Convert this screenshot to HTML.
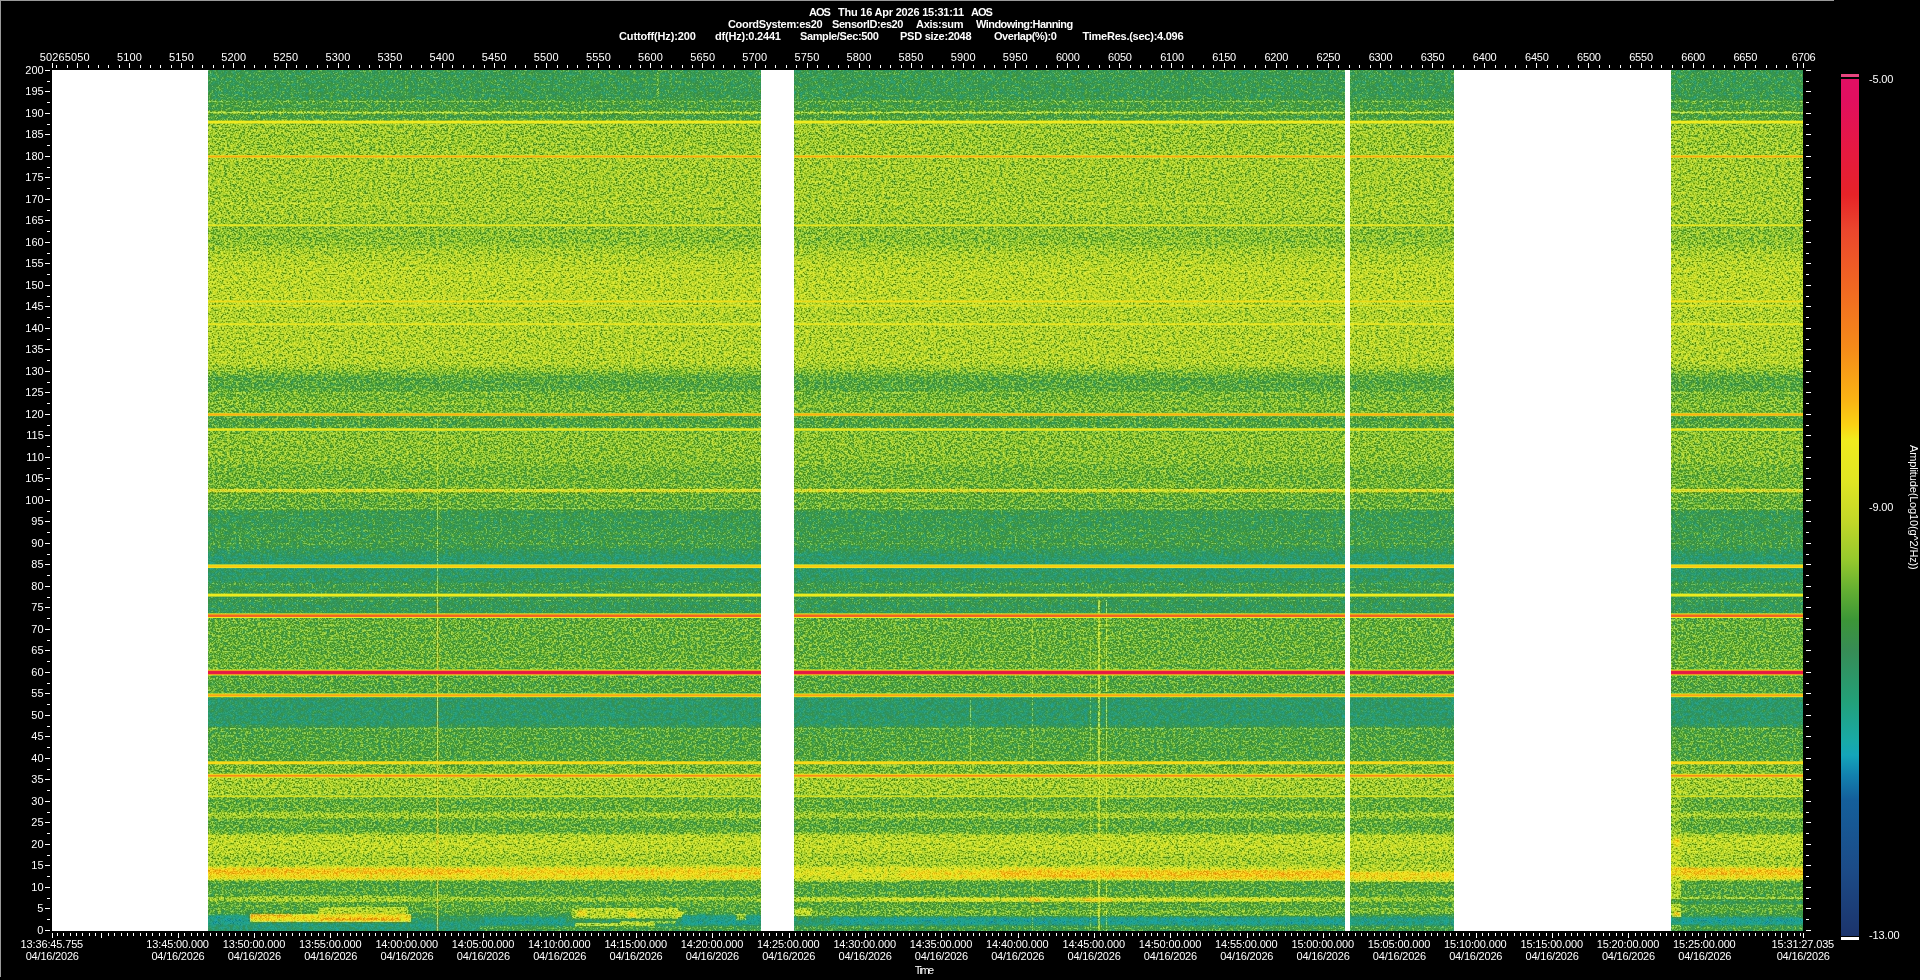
<!DOCTYPE html>
<html><head><meta charset="utf-8"><title>AOS spectrogram</title>
<style>html,body{margin:0;padding:0;background:#000;}
body{width:1920px;height:980px;position:relative;overflow:hidden;font-family:"Liberation Sans",sans-serif;font-size:11px;color:#fff;}
.t{position:absolute;white-space:pre;line-height:12px;height:12px;}
.b{font-weight:bold;}
.c{transform:translateX(-50%);text-align:center;}
.r{text-align:right;}
svg{position:absolute;left:0;top:0;}
</style></head><body>
<svg width="1920" height="980" viewBox="0 0 1920 980">
<defs>
<linearGradient id="lv" gradientUnits="userSpaceOnUse" x1="0" y1="70" x2="0" y2="931">
<stop offset="0.0006" stop-color="rgb(88,88,88)"/><stop offset="0.0330" stop-color="rgb(88,88,88)"/><stop offset="0.0380" stop-color="rgb(94,94,94)"/><stop offset="0.0555" stop-color="rgb(94,94,94)"/><stop offset="0.0640" stop-color="rgb(115,115,115)"/><stop offset="0.0955" stop-color="rgb(115,115,115)"/><stop offset="0.1055" stop-color="rgb(117,117,117)"/><stop offset="0.1704" stop-color="rgb(117,117,117)"/><stop offset="0.1844" stop-color="rgb(111,111,111)"/><stop offset="0.2003" stop-color="rgb(111,111,111)"/><stop offset="0.2103" stop-color="rgb(118,118,118)"/><stop offset="0.2203" stop-color="rgb(121,121,121)"/><stop offset="0.2303" stop-color="rgb(124,124,124)"/><stop offset="0.2653" stop-color="rgb(124,124,124)"/><stop offset="0.2803" stop-color="rgb(121,121,121)"/><stop offset="0.3402" stop-color="rgb(121,121,121)"/><stop offset="0.3477" stop-color="rgb(113,113,113)"/><stop offset="0.3577" stop-color="rgb(99,99,99)"/><stop offset="0.3652" stop-color="rgb(98,98,98)"/><stop offset="0.3721" stop-color="rgb(99,99,99)"/><stop offset="0.3776" stop-color="rgb(105,105,105)"/><stop offset="0.3851" stop-color="rgb(107,107,107)"/><stop offset="0.3951" stop-color="rgb(107,107,107)"/><stop offset="0.4026" stop-color="rgb(97,97,97)"/><stop offset="0.4126" stop-color="rgb(97,97,97)"/><stop offset="0.4226" stop-color="rgb(111,111,111)"/><stop offset="0.4551" stop-color="rgb(110,110,110)"/><stop offset="0.4650" stop-color="rgb(105,105,105)"/><stop offset="0.4850" stop-color="rgb(105,105,105)"/><stop offset="0.4950" stop-color="rgb(102,102,102)"/><stop offset="0.5075" stop-color="rgb(102,102,102)"/><stop offset="0.5125" stop-color="rgb(88,88,88)"/><stop offset="0.5300" stop-color="rgb(88,88,88)"/><stop offset="0.5350" stop-color="rgb(91,91,91)"/><stop offset="0.5449" stop-color="rgb(91,91,91)"/><stop offset="0.5549" stop-color="rgb(89,89,89)"/><stop offset="0.5599" stop-color="rgb(83,83,83)"/><stop offset="0.5649" stop-color="rgb(78,78,78)"/><stop offset="0.5724" stop-color="rgb(78,78,78)"/><stop offset="0.5799" stop-color="rgb(79,79,79)"/><stop offset="0.5924" stop-color="rgb(80,80,80)"/><stop offset="0.5974" stop-color="rgb(88,88,88)"/><stop offset="0.6049" stop-color="rgb(88,88,88)"/><stop offset="0.6174" stop-color="rgb(85,85,85)"/><stop offset="0.6298" stop-color="rgb(85,85,85)"/><stop offset="0.6378" stop-color="rgb(102,102,102)"/><stop offset="0.6848" stop-color="rgb(102,102,102)"/><stop offset="0.6948" stop-color="rgb(103,103,103)"/><stop offset="0.7048" stop-color="rgb(99,99,99)"/><stop offset="0.7222" stop-color="rgb(98,98,98)"/><stop offset="0.7297" stop-color="rgb(79,79,79)"/><stop offset="0.7597" stop-color="rgb(79,79,79)"/><stop offset="0.7647" stop-color="rgb(92,92,92)"/><stop offset="0.7697" stop-color="rgb(97,97,97)"/><stop offset="0.7997" stop-color="rgb(97,97,97)"/><stop offset="0.8071" stop-color="rgb(107,107,107)"/><stop offset="0.8171" stop-color="rgb(107,107,107)"/><stop offset="0.8221" stop-color="rgb(117,117,117)"/><stop offset="0.8396" stop-color="rgb(117,117,117)"/><stop offset="0.8471" stop-color="rgb(102,102,102)"/><stop offset="0.8606" stop-color="rgb(102,102,102)"/><stop offset="0.8636" stop-color="rgb(117,117,117)"/><stop offset="0.8676" stop-color="rgb(117,117,117)"/><stop offset="0.8706" stop-color="rgb(101,101,101)"/><stop offset="0.8846" stop-color="rgb(101,101,101)"/><stop offset="0.8895" stop-color="rgb(124,124,124)"/><stop offset="0.9045" stop-color="rgb(125,125,125)"/><stop offset="0.9120" stop-color="rgb(119,119,119)"/><stop offset="0.9235" stop-color="rgb(117,117,117)"/><stop offset="0.9270" stop-color="rgb(143,143,143)"/><stop offset="0.9335" stop-color="rgb(147,147,147)"/><stop offset="0.9395" stop-color="rgb(142,142,142)"/><stop offset="0.9425" stop-color="rgb(98,98,98)"/><stop offset="0.9595" stop-color="rgb(98,98,98)"/><stop offset="0.9610" stop-color="rgb(115,115,115)"/><stop offset="0.9645" stop-color="rgb(115,115,115)"/><stop offset="0.9665" stop-color="rgb(99,99,99)"/><stop offset="0.9769" stop-color="rgb(99,99,99)"/><stop offset="0.9829" stop-color="rgb(89,89,89)"/><stop offset="0.9884" stop-color="rgb(79,79,79)"/><stop offset="0.9929" stop-color="rgb(74,74,74)"/><stop offset="0.9994" stop-color="rgb(76,76,76)"/>
</linearGradient>
<filter id="sp" filterUnits="userSpaceOnUse" x="48" y="66" width="1759" height="869" color-interpolation-filters="sRGB">
<feTurbulence type="fractalNoise" baseFrequency="0.66 0.7" numOctaves="1" seed="7" result="n"/>
<feColorMatrix in="n" type="matrix" values="2.5 0 0 0 -0.75  2.5 0 0 0 -0.75  2.5 0 0 0 -0.75  0 0 0 0 1" result="ng"/>
<feTurbulence type="fractalNoise" baseFrequency="0.33 0.37" numOctaves="1" seed="11" result="n2"/>
<feColorMatrix in="n2" type="matrix" values="2.5 0 0 0 -0.75  2.5 0 0 0 -0.75  2.5 0 0 0 -0.75  0 0 0 0 1" result="ng2"/>
<feComposite in="ng" in2="ng2" operator="arithmetic" k1="0" k2="1" k3="0.6" k4="-0.3" result="ng"/>
<feComponentTransfer in="ng" result="ns"><feFuncR type="table" tableValues="0.367 0.394 0.395 0.398 0.400 0.402 0.404 0.406 0.408 0.411 0.413 0.415 0.417 0.419 0.421 0.423 0.424 0.426 0.428 0.430 0.432 0.434 0.435 0.437 0.439 0.440 0.442 0.444 0.445 0.447 0.449 0.450 0.452 0.454 0.455 0.457 0.458 0.460 0.461 0.463 0.465 0.466 0.468 0.469 0.471 0.472 0.474 0.475 0.477 0.478 0.480 0.481 0.482 0.484 0.485 0.487 0.488 0.489 0.491 0.492 0.494 0.495 0.496 0.498 0.499 0.500 0.502 0.503 0.504 0.505 0.507 0.508 0.509 0.511 0.512 0.513 0.514 0.516 0.517 0.518 0.519 0.520 0.522 0.523 0.524 0.525 0.526 0.528 0.529 0.530 0.531 0.532 0.533 0.535 0.536 0.537 0.538 0.539 0.540 0.541 0.542 0.543 0.545 0.546 0.547 0.548 0.549 0.550 0.551 0.552 0.553 0.554 0.555 0.556 0.557 0.558 0.559 0.561 0.562 0.563 0.564 0.565 0.566 0.567 0.568 0.569 0.570 0.571 0.582"/><feFuncG type="table" tableValues="0.367 0.394 0.395 0.398 0.400 0.402 0.404 0.406 0.408 0.411 0.413 0.415 0.417 0.419 0.421 0.423 0.424 0.426 0.428 0.430 0.432 0.434 0.435 0.437 0.439 0.440 0.442 0.444 0.445 0.447 0.449 0.450 0.452 0.454 0.455 0.457 0.458 0.460 0.461 0.463 0.465 0.466 0.468 0.469 0.471 0.472 0.474 0.475 0.477 0.478 0.480 0.481 0.482 0.484 0.485 0.487 0.488 0.489 0.491 0.492 0.494 0.495 0.496 0.498 0.499 0.500 0.502 0.503 0.504 0.505 0.507 0.508 0.509 0.511 0.512 0.513 0.514 0.516 0.517 0.518 0.519 0.520 0.522 0.523 0.524 0.525 0.526 0.528 0.529 0.530 0.531 0.532 0.533 0.535 0.536 0.537 0.538 0.539 0.540 0.541 0.542 0.543 0.545 0.546 0.547 0.548 0.549 0.550 0.551 0.552 0.553 0.554 0.555 0.556 0.557 0.558 0.559 0.561 0.562 0.563 0.564 0.565 0.566 0.567 0.568 0.569 0.570 0.571 0.582"/><feFuncB type="table" tableValues="0.367 0.394 0.395 0.398 0.400 0.402 0.404 0.406 0.408 0.411 0.413 0.415 0.417 0.419 0.421 0.423 0.424 0.426 0.428 0.430 0.432 0.434 0.435 0.437 0.439 0.440 0.442 0.444 0.445 0.447 0.449 0.450 0.452 0.454 0.455 0.457 0.458 0.460 0.461 0.463 0.465 0.466 0.468 0.469 0.471 0.472 0.474 0.475 0.477 0.478 0.480 0.481 0.482 0.484 0.485 0.487 0.488 0.489 0.491 0.492 0.494 0.495 0.496 0.498 0.499 0.500 0.502 0.503 0.504 0.505 0.507 0.508 0.509 0.511 0.512 0.513 0.514 0.516 0.517 0.518 0.519 0.520 0.522 0.523 0.524 0.525 0.526 0.528 0.529 0.530 0.531 0.532 0.533 0.535 0.536 0.537 0.538 0.539 0.540 0.541 0.542 0.543 0.545 0.546 0.547 0.548 0.549 0.550 0.551 0.552 0.553 0.554 0.555 0.556 0.557 0.558 0.559 0.561 0.562 0.563 0.564 0.565 0.566 0.567 0.568 0.569 0.570 0.571 0.582"/></feComponentTransfer>
<feComposite in="SourceGraphic" in2="ns" operator="arithmetic" k1="0" k2="1" k3="1" k4="-0.5" result="lv2"/>
<feComponentTransfer in="lv2" result="col"><feFuncR type="table" tableValues="0.088 0.086 0.085 0.083 0.081 0.080 0.078 0.077 0.076 0.075 0.074 0.073 0.072 0.071 0.072 0.073 0.074 0.076 0.077 0.078 0.083 0.087 0.092 0.099 0.107 0.116 0.124 0.133 0.144 0.157 0.170 0.184 0.197 0.210 0.219 0.225 0.230 0.240 0.285 0.329 0.374 0.426 0.482 0.538 0.592 0.630 0.669 0.707 0.746 0.777 0.802 0.827 0.852 0.877 0.892 0.905 0.917 0.930 0.943 0.967 0.980 0.980 0.980 0.979 0.975 0.972 0.969 0.965 0.962 0.959 0.957 0.954 0.952 0.950 0.947 0.945 0.942 0.940 0.936 0.933 0.930 0.926 0.923 0.919 0.914 0.909 0.904 0.902 0.902 0.902 0.902 0.902 0.901 0.898 0.894 0.891 0.887 0.884 0.882 0.882 0.882"/><feFuncG type="table" tableValues="0.350 0.353 0.357 0.361 0.365 0.369 0.373 0.391 0.410 0.429 0.448 0.467 0.486 0.505 0.528 0.552 0.575 0.599 0.623 0.647 0.651 0.656 0.660 0.666 0.657 0.649 0.640 0.632 0.621 0.608 0.594 0.581 0.568 0.554 0.556 0.567 0.578 0.591 0.619 0.647 0.675 0.703 0.731 0.759 0.786 0.798 0.811 0.824 0.837 0.849 0.862 0.874 0.887 0.899 0.905 0.909 0.914 0.918 0.916 0.858 0.807 0.767 0.726 0.693 0.666 0.639 0.613 0.586 0.560 0.537 0.518 0.499 0.479 0.460 0.441 0.421 0.402 0.382 0.362 0.342 0.322 0.302 0.282 0.254 0.221 0.187 0.154 0.133 0.126 0.118 0.111 0.103 0.096 0.089 0.082 0.076 0.069 0.062 0.059 0.059 0.059"/><feFuncB type="table" tableValues="0.585 0.589 0.593 0.596 0.600 0.604 0.608 0.619 0.629 0.640 0.651 0.662 0.673 0.684 0.691 0.698 0.705 0.712 0.719 0.725 0.708 0.691 0.673 0.643 0.605 0.566 0.528 0.490 0.459 0.436 0.412 0.389 0.366 0.343 0.313 0.280 0.246 0.215 0.210 0.204 0.198 0.193 0.187 0.182 0.176 0.172 0.168 0.163 0.159 0.155 0.151 0.146 0.142 0.138 0.134 0.130 0.126 0.121 0.115 0.092 0.078 0.078 0.078 0.080 0.083 0.087 0.090 0.093 0.097 0.101 0.106 0.111 0.115 0.120 0.125 0.130 0.135 0.141 0.147 0.154 0.161 0.167 0.174 0.174 0.169 0.164 0.159 0.166 0.185 0.204 0.223 0.242 0.261 0.281 0.302 0.322 0.342 0.362 0.376 0.384 0.392"/></feComponentTransfer>
<feConvolveMatrix in="col" order="5" kernelMatrix="1 4 6 4 1 4 16 24 16 4 6 24 36 24 6 4 16 24 16 4 1 4 6 4 1" divisor="256" edgeMode="duplicate" preserveAlpha="true" result="cb"/>
<feColorMatrix in="col" type="matrix" values="0.299 0.587 0.114 0 0  0.299 0.587 0.114 0 0  0.299 0.587 0.114 0 0  0 0 0 0 1" result="l1"/>
<feColorMatrix in="cb" type="matrix" values="0.299 0.587 0.114 0 0  0.299 0.587 0.114 0 0  0.299 0.587 0.114 0 0  0 0 0 0 1" result="l2"/>
<feComposite in="l1" in2="l2" operator="arithmetic" k1="0" k2="0.5" k3="-0.5" k4="0.5" result="ld"/>
<feComposite in="cb" in2="ld" operator="arithmetic" k1="0" k2="1" k3="2" k4="-1"/>
</filter>
</defs>
<rect x="0" y="0" width="1834" height="1" fill="#9a9a9a"/><rect x="0" y="0" width="1" height="977" fill="#9a9a9a"/>
<rect x="52" y="70" width="1751" height="861" fill="#fff"/>
<clipPath id="cp"><rect x="52" y="70" width="1751" height="861"/></clipPath>
<g clip-path="url(#cp)"><g filter="url(#sp)"><rect x="48" y="66" width="1759" height="869" fill="url(#lv)"/>
<rect x="52" y="100.7" width="1751" height="1.5" fill="rgb(115,115,115)" opacity="0.60"/><rect x="52" y="111.7" width="1751" height="1.8" fill="rgb(130,130,130)" opacity="0.95"/><rect x="52" y="203.0" width="1751" height="1.5" fill="rgb(130,130,130)" opacity="0.60"/><rect x="52" y="392.2" width="1751" height="1.5" fill="rgb(115,115,115)" opacity="0.80"/><rect x="52" y="403.4" width="1751" height="1.5" fill="rgb(115,115,115)" opacity="0.60"/><rect x="52" y="489.1" width="1751" height="3.0" fill="rgb(145,145,145)" opacity="0.90"/><rect x="52" y="508.1" width="1751" height="1.2" fill="rgb(117,117,117)" opacity="0.80"/><rect x="52" y="542.8" width="1751" height="1.5" fill="rgb(102,102,102)" opacity="0.60"/><rect x="52" y="583.2" width="1751" height="1.5" fill="rgb(102,102,102)" opacity="0.60"/><rect x="52" y="600.1" width="1751" height="1.2" fill="rgb(102,102,102)" opacity="0.60"/><rect x="52" y="660.6" width="1751" height="1.5" fill="rgb(117,117,117)" opacity="0.50"/><rect x="52" y="728.0" width="1751" height="1.6" fill="rgb(110,110,110)" opacity="0.80"/><rect x="208" y="868.5" width="553" height="6" fill="rgb(161,161,161)" opacity="0.35"/><rect x="208" y="868.5" width="262" height="5.5" fill="rgb(168,168,168)" opacity="0.35"/><rect x="250" y="896" width="161" height="6" fill="rgb(120,120,120)" opacity="0.80"/><rect x="318" y="907" width="90" height="7" fill="rgb(128,128,128)" opacity="0.80"/><rect x="250" y="914" width="161" height="8" fill="rgb(149,149,149)" opacity="0.95"/><rect x="250" y="914" width="42" height="2.5" fill="rgb(168,168,168)" opacity="0.80"/><rect x="320" y="918" width="80" height="2.5" fill="rgb(171,171,171)" opacity="0.80"/><rect x="208" y="915" width="42" height="10" fill="rgb(64,64,64)" opacity="0.85"/><rect x="250" y="922" width="80" height="4" fill="rgb(71,71,71)" opacity="0.80"/><rect x="572" y="908" width="106" height="10.5" fill="rgb(128,128,128)" opacity="0.85"/><rect x="578" y="911" width="8" height="5" fill="rgb(158,158,158)" opacity="0.70"/><rect x="628" y="912" width="8" height="5" fill="rgb(158,158,158)" opacity="0.70"/><rect x="676" y="912" width="8" height="5" fill="rgb(153,153,153)" opacity="0.70"/><rect x="575" y="923" width="80" height="3" fill="rgb(133,133,133)" opacity="0.85"/><rect x="620" y="921" width="56" height="2.5" fill="rgb(128,128,128)" opacity="0.70"/><rect x="480" y="917" width="86" height="8" fill="rgb(66,66,66)" opacity="0.80"/><rect x="682" y="915" width="79" height="10" fill="rgb(64,64,64)" opacity="0.80"/><rect x="736" y="914" width="10" height="6" fill="rgb(133,133,133)" opacity="0.70"/><rect x="480" y="926" width="281" height="5" fill="rgb(102,102,102)" opacity="0.70"/><rect x="794" y="897.5" width="551" height="4" fill="rgb(128,128,128)" opacity="0.70"/><rect x="880" y="898" width="410" height="3.5" fill="rgb(140,140,140)" opacity="0.70"/><rect x="1030" y="897" width="12" height="5" fill="rgb(163,163,163)" opacity="0.70"/><rect x="1080" y="898" width="32" height="4" fill="rgb(158,158,158)" opacity="0.60"/><rect x="794" y="866" width="106" height="16" fill="rgb(125,125,125)" opacity="0.55"/><rect x="900" y="866" width="100" height="4" fill="rgb(122,122,122)" opacity="0.40"/><rect x="1000" y="870.5" width="345" height="7" fill="rgb(163,163,163)" opacity="0.60"/><rect x="1150" y="866" width="195" height="4" fill="rgb(122,122,122)" opacity="0.50"/><rect x="1150" y="877" width="195" height="4" fill="rgb(153,153,153)" opacity="0.40"/><rect x="794" y="910" width="551" height="6" fill="rgb(110,110,110)" opacity="0.70"/><rect x="794" y="908" width="18" height="8" fill="rgb(133,133,133)" opacity="0.70"/><rect x="830" y="917" width="515" height="8" fill="rgb(62,62,62)" opacity="0.85"/><rect x="794" y="925.5" width="551" height="5.5" fill="rgb(98,98,98)" opacity="0.80"/><rect x="1350" y="866.5" width="104" height="5" fill="rgb(117,117,117)" opacity="0.85"/><rect x="1350" y="872" width="104" height="10" fill="rgb(148,148,148)" opacity="0.60"/><rect x="1350" y="908" width="104" height="6" fill="rgb(112,112,112)" opacity="0.60"/><rect x="1350" y="917" width="104" height="8" fill="rgb(66,66,66)" opacity="0.80"/><rect x="1350" y="925.5" width="104" height="5.5" fill="rgb(97,97,97)" opacity="0.80"/><rect x="1671" y="786" width="10" height="54" fill="rgb(120,120,120)" opacity="0.60"/><rect x="1671" y="840" width="10" height="91" fill="rgb(128,128,128)" opacity="0.80"/><rect x="1673" y="838" width="7" height="8" fill="rgb(158,158,158)" opacity="0.70"/><rect x="1674" y="912" width="7" height="8" fill="rgb(158,158,158)" opacity="0.70"/><rect x="1681" y="866.5" width="122" height="2" fill="rgb(117,117,117)" opacity="0.70"/><rect x="1671" y="867.5" width="132" height="7.5" fill="rgb(161,161,161)" opacity="0.60"/><rect x="1671" y="917" width="132" height="8" fill="rgb(62,62,62)" opacity="0.85"/><rect x="1671" y="925.5" width="132" height="5.5" fill="rgb(97,97,97)" opacity="0.80"/><rect x="1671" y="899" width="132" height="5" fill="rgb(76,76,76)" opacity="0.60"/><rect x="437" y="420" width="1" height="180" fill="rgb(128,128,128)" opacity="0.80"/><rect x="437" y="600" width="1" height="331" fill="rgb(150,150,150)" opacity="1.00"/><rect x="1098" y="600" width="2" height="331" fill="rgb(140,140,140)" opacity="0.70"/><rect x="1106" y="600" width="1" height="331" fill="rgb(140,140,140)" opacity="0.65"/><rect x="1090" y="640" width="1" height="291" fill="rgb(133,133,133)" opacity="0.50"/><rect x="970" y="700" width="1" height="90" fill="rgb(133,133,133)" opacity="0.60"/><rect x="1032" y="620" width="1" height="311" fill="rgb(133,133,133)" opacity="0.50"/><rect x="657" y="70" width="2" height="30" fill="rgb(115,115,115)" opacity="0.50"/><rect x="405" y="70" width="1" height="26" fill="rgb(112,112,112)" opacity="0.50"/>
</g></g>
<g>
<rect x="52" y="120.6" width="1751" height="3.0" fill="#edea1f" opacity="1.00"/><rect x="52" y="155.0" width="1751" height="3.0" fill="#f1ea1d" opacity="0.70"/><rect x="52" y="155.7" width="1751" height="1.6" fill="#f9ad15" opacity="1.00"/><rect x="52" y="224.3" width="1751" height="2.0" fill="#eae920" opacity="0.90"/><rect x="52" y="300.4" width="1751" height="2.0" fill="#f4e21a" opacity="0.85"/><rect x="52" y="305.0" width="1751" height="1.5" fill="#e7e821" opacity="0.70"/><rect x="52" y="323.2" width="1751" height="2.0" fill="#edea1f" opacity="0.85"/><rect x="52" y="412.8" width="1751" height="3.4" fill="#edea1f" opacity="0.80"/><rect x="52" y="413.6" width="1751" height="1.9" fill="#fab114" opacity="1.00"/><rect x="52" y="428.3" width="1751" height="2.5" fill="#edea1f" opacity="0.95"/><rect x="52" y="564.4" width="1751" height="3.7" fill="#ecea1f" opacity="1.00"/><rect x="52" y="565.3" width="1751" height="2.0" fill="#fac914" opacity="1.00"/><rect x="52" y="593.6" width="1751" height="3.0" fill="#ecea1f" opacity="1.00"/><rect x="52" y="613.4" width="1751" height="4.6" fill="#f1ea1d" opacity="1.00"/><rect x="52" y="614.4" width="1751" height="2.6" fill="#f06622" opacity="1.00"/><rect x="52" y="669.5" width="1751" height="6.0" fill="#eae920" opacity="1.00"/><rect x="52" y="670.4" width="1751" height="4.2" fill="#f06622" opacity="1.00"/><rect x="52" y="671.1" width="1751" height="2.8" fill="#e51748" opacity="1.00"/><rect x="52" y="693.4" width="1751" height="3.8" fill="#ecea1f" opacity="1.00"/><rect x="52" y="694.3" width="1751" height="2.0" fill="#f8a616" opacity="1.00"/><rect x="52" y="761.3" width="1751" height="3.0" fill="#f6db18" opacity="1.00"/><rect x="52" y="773.7" width="1751" height="4.0" fill="#edea1f" opacity="1.00"/><rect x="52" y="774.7" width="1751" height="2.0" fill="#f58f19" opacity="1.00"/><rect x="52" y="795.4" width="1751" height="1.8" fill="#e4e722" opacity="0.80"/>
</g>
<!--EXTRA_TOP-->
<rect x="52" y="70" width="156" height="861" fill="#fff"/><rect x="761" y="70" width="33" height="861" fill="#fff"/><rect x="1345" y="70" width="5" height="861" fill="#fff"/><rect x="1454" y="70" width="217" height="861" fill="#fff"/>
<path d="M56 65v3M67 65v3M77 63v5M88 65v3M98 65v3M108 65v3M119 65v3M129 63v5M140 65v3M150 65v3M160 65v3M171 65v3M181 63v5M192 65v3M202 65v3M213 65v3M223 65v3M233 63v5M244 65v3M254 65v3M265 65v3M275 65v3M286 63v5M296 65v3M306 65v3M317 65v3M327 65v3M338 63v5M348 65v3M359 65v3M369 65v3M379 65v3M390 63v5M400 65v3M411 65v3M421 65v3M431 65v3M442 63v5M452 65v3M463 65v3M473 65v3M484 65v3M494 63v5M504 65v3M515 65v3M525 65v3M536 65v3M546 63v5M557 65v3M567 65v3M577 65v3M588 65v3M598 63v5M609 65v3M619 65v3M630 65v3M640 65v3M650 63v5M661 65v3M671 65v3M682 65v3M692 65v3M702 63v5M713 65v3M723 65v3M734 65v3M744 65v3M755 63v5M765 65v3M775 65v3M786 65v3M796 65v3M807 63v5M817 65v3M828 65v3M838 65v3M848 65v3M859 63v5M869 65v3M880 65v3M890 65v3M901 65v3M911 63v5M921 65v3M932 65v3M942 65v3M953 65v3M963 63v5M973 65v3M984 65v3M994 65v3M1005 65v3M1015 63v5M1026 65v3M1036 65v3M1046 65v3M1057 65v3M1067 63v5M1078 65v3M1088 65v3M1099 65v3M1109 65v3M1119 63v5M1130 65v3M1140 65v3M1151 65v3M1161 65v3M1171 63v5M1182 65v3M1192 65v3M1203 65v3M1213 65v3M1224 63v5M1234 65v3M1244 65v3M1255 65v3M1265 65v3M1276 63v5M1286 65v3M1297 65v3M1307 65v3M1317 65v3M1328 63v5M1338 65v3M1349 65v3M1359 65v3M1370 65v3M1380 63v5M1390 65v3M1401 65v3M1411 65v3M1422 65v3M1432 63v5M1442 65v3M1453 65v3M1463 65v3M1474 65v3M1484 63v5M1495 65v3M1505 65v3M1515 65v3M1526 65v3M1536 63v5M1547 65v3M1557 65v3M1568 65v3M1578 65v3M1588 63v5M1599 65v3M1609 65v3M1620 65v3M1630 65v3M1641 63v5M1651 65v3M1661 65v3M1672 65v3M1682 65v3M1693 63v5M1703 65v3M1713 65v3M1724 65v3M1734 65v3M1745 63v5M1755 65v3M1766 65v3M1776 65v3M1786 65v3M1797 63v5M52 63v5M1803 63v5M57 933v3M63 933v3M70 933v3M76 933v3M82 933v3M89 933v3M95 933v3M101 933v5M108 933v3M114 933v3M121 933v3M127 933v3M133 933v3M140 933v3M146 933v3M152 933v3M159 933v3M165 933v3M171 933v3M178 933v5M184 933v3M191 933v3M197 933v3M203 933v3M210 933v3M216 933v3M222 933v3M229 933v3M235 933v3M241 933v3M248 933v3M254 933v5M261 933v3M267 933v3M273 933v3M280 933v3M286 933v3M292 933v3M299 933v3M305 933v3M311 933v3M318 933v3M324 933v3M330 933v5M337 933v3M343 933v3M350 933v3M356 933v3M362 933v3M369 933v3M375 933v3M381 933v3M388 933v3M394 933v3M400 933v3M407 933v5M413 933v3M420 933v3M426 933v3M432 933v3M439 933v3M445 933v3M451 933v3M458 933v3M464 933v3M470 933v3M477 933v3M483 933v5M490 933v3M496 933v3M502 933v3M509 933v3M515 933v3M521 933v3M528 933v3M534 933v3M540 933v3M547 933v3M553 933v3M560 933v5M566 933v3M572 933v3M579 933v3M585 933v3M591 933v3M598 933v3M604 933v3M610 933v3M617 933v3M623 933v3M629 933v3M636 933v5M642 933v3M649 933v3M655 933v3M661 933v3M668 933v3M674 933v3M680 933v3M687 933v3M693 933v3M699 933v3M706 933v3M712 933v5M719 933v3M725 933v3M731 933v3M738 933v3M744 933v3M750 933v3M757 933v3M763 933v3M769 933v3M776 933v3M782 933v3M789 933v5M795 933v3M801 933v3M808 933v3M814 933v3M820 933v3M827 933v3M833 933v3M839 933v3M846 933v3M852 933v3M858 933v3M865 933v5M871 933v3M878 933v3M884 933v3M890 933v3M897 933v3M903 933v3M909 933v3M916 933v3M922 933v3M928 933v3M935 933v3M941 933v5M948 933v3M954 933v3M960 933v3M967 933v3M973 933v3M979 933v3M986 933v3M992 933v3M998 933v3M1005 933v3M1011 933v3M1018 933v5M1024 933v3M1030 933v3M1037 933v3M1043 933v3M1049 933v3M1056 933v3M1062 933v3M1068 933v3M1075 933v3M1081 933v3M1088 933v3M1094 933v5M1100 933v3M1107 933v3M1113 933v3M1119 933v3M1126 933v3M1132 933v3M1138 933v3M1145 933v3M1151 933v3M1157 933v3M1164 933v3M1170 933v5M1177 933v3M1183 933v3M1189 933v3M1196 933v3M1202 933v3M1208 933v3M1215 933v3M1221 933v3M1227 933v3M1234 933v3M1240 933v3M1247 933v5M1253 933v3M1259 933v3M1266 933v3M1272 933v3M1278 933v3M1285 933v3M1291 933v3M1297 933v3M1304 933v3M1310 933v3M1317 933v3M1323 933v5M1329 933v3M1336 933v3M1342 933v3M1348 933v3M1355 933v3M1361 933v3M1367 933v3M1374 933v3M1380 933v3M1386 933v3M1393 933v3M1399 933v5M1406 933v3M1412 933v3M1418 933v3M1425 933v3M1431 933v3M1437 933v3M1444 933v3M1450 933v3M1456 933v3M1463 933v3M1469 933v3M1476 933v5M1482 933v3M1488 933v3M1495 933v3M1501 933v3M1507 933v3M1514 933v3M1520 933v3M1526 933v3M1533 933v3M1539 933v3M1546 933v3M1552 933v5M1558 933v3M1565 933v3M1571 933v3M1577 933v3M1584 933v3M1590 933v3M1596 933v3M1603 933v3M1609 933v3M1616 933v3M1622 933v3M1628 933v5M1635 933v3M1641 933v3M1647 933v3M1654 933v3M1660 933v3M1666 933v3M1673 933v3M1679 933v3M1685 933v3M1692 933v3M1698 933v3M1705 933v5M1711 933v3M1717 933v3M1724 933v3M1730 933v3M1736 933v3M1743 933v3M1749 933v3M1755 933v3M1762 933v3M1768 933v3M1775 933v3M1781 933v5M1787 933v3M1794 933v3M1800 933v3M52 933v5M1803 933v5" stroke="#fff" stroke-width="1" fill="none" transform="translate(0.5,0)" shape-rendering="crispEdges"/>
<path d="M45 930h5M1806 930h5M47 919h3M1806 919h3M45 908h5M1806 908h5M47 898h3M1806 898h3M45 887h5M1806 887h5M47 876h3M1806 876h3M45 865h5M1806 865h5M47 855h3M1806 855h3M45 844h5M1806 844h5M47 833h3M1806 833h3M45 822h5M1806 822h5M47 812h3M1806 812h3M45 801h5M1806 801h5M47 790h3M1806 790h3M45 779h5M1806 779h5M47 769h3M1806 769h3M45 758h5M1806 758h5M47 747h3M1806 747h3M45 736h5M1806 736h5M47 726h3M1806 726h3M45 715h5M1806 715h5M47 704h3M1806 704h3M45 693h5M1806 693h5M47 683h3M1806 683h3M45 672h5M1806 672h5M47 661h3M1806 661h3M45 650h5M1806 650h5M47 640h3M1806 640h3M45 629h5M1806 629h5M47 618h3M1806 618h3M45 607h5M1806 607h5M47 597h3M1806 597h3M45 586h5M1806 586h5M47 575h3M1806 575h3M45 564h5M1806 564h5M47 554h3M1806 554h3M45 543h5M1806 543h5M47 532h3M1806 532h3M45 521h5M1806 521h5M47 511h3M1806 511h3M45 500h5M1806 500h5M47 489h3M1806 489h3M45 478h5M1806 478h5M47 468h3M1806 468h3M45 457h5M1806 457h5M47 446h3M1806 446h3M45 435h5M1806 435h5M47 425h3M1806 425h3M45 414h5M1806 414h5M47 403h3M1806 403h3M45 392h5M1806 392h5M47 382h3M1806 382h3M45 371h5M1806 371h5M47 360h3M1806 360h3M45 349h5M1806 349h5M47 339h3M1806 339h3M45 328h5M1806 328h5M47 317h3M1806 317h3M45 306h5M1806 306h5M47 296h3M1806 296h3M45 285h5M1806 285h5M47 274h3M1806 274h3M45 263h5M1806 263h5M47 253h3M1806 253h3M45 242h5M1806 242h5M47 231h3M1806 231h3M45 220h5M1806 220h5M47 210h3M1806 210h3M45 199h5M1806 199h5M47 188h3M1806 188h3M45 177h5M1806 177h5M47 167h3M1806 167h3M45 156h5M1806 156h5M47 145h3M1806 145h3M45 134h5M1806 134h5M47 124h3M1806 124h3M45 113h5M1806 113h5M47 102h3M1806 102h3M45 91h5M1806 91h5M47 81h3M1806 81h3M45 70h5M1806 70h5" stroke="#fff" stroke-width="1" fill="none" transform="translate(0,0.5)" shape-rendering="crispEdges"/>
<linearGradient id="cb" gradientUnits="userSpaceOnUse" x1="0" y1="936" x2="0" y2="79"><stop offset="0.000" stop-color="rgb(28,52,108)"/><stop offset="0.077" stop-color="rgb(28,75,135)"/><stop offset="0.159" stop-color="rgb(20,95,155)"/><stop offset="0.188" stop-color="rgb(18,130,175)"/><stop offset="0.211" stop-color="rgb(20,165,185)"/><stop offset="0.229" stop-color="rgb(25,170,165)"/><stop offset="0.275" stop-color="rgb(35,160,120)"/><stop offset="0.334" stop-color="rgb(55,140,85)"/><stop offset="0.369" stop-color="rgb(60,150,55)"/><stop offset="0.404" stop-color="rgb(100,175,50)"/><stop offset="0.439" stop-color="rgb(150,200,45)"/><stop offset="0.485" stop-color="rgb(195,215,40)"/><stop offset="0.532" stop-color="rgb(225,230,35)"/><stop offset="0.579" stop-color="rgb(240,235,30)"/><stop offset="0.596" stop-color="rgb(250,210,20)"/><stop offset="0.625" stop-color="rgb(250,180,20)"/><stop offset="0.684" stop-color="rgb(245,140,25)"/><stop offset="0.765" stop-color="rgb(240,100,35)"/><stop offset="0.824" stop-color="rgb(235,70,45)"/><stop offset="0.865" stop-color="rgb(230,35,40)"/><stop offset="0.917" stop-color="rgb(230,25,65)"/><stop offset="0.975" stop-color="rgb(225,15,95)"/><stop offset="1.000" stop-color="rgb(225,15,100)"/></linearGradient>
<rect x="1841" y="79" width="18" height="857" fill="url(#cb)"/><rect x="1841" y="74" width="18" height="3" fill="#e8457f"/><rect x="1841" y="937" width="18" height="3" fill="#fff"/>
</svg>
<div id="txt" style="position:absolute;left:0;top:0;width:1920px;height:980px;opacity:0.999;will-change:opacity">
<div class="t b" style="left:809.00px;top:6.0px;letter-spacing:-1.000px;">AOS</div>
<div class="t b" style="left:838.00px;top:6.0px;letter-spacing:-0.217px;">Thu 16 Apr 2026 15:31:11</div>
<div class="t b" style="left:971.00px;top:6.0px;letter-spacing:-1.000px;">AOS</div>
<div class="t b" style="left:728.00px;top:18.0px;letter-spacing:-0.333px;">CoordSystem:es20</div>
<div class="t b" style="left:832.00px;top:18.0px;letter-spacing:-0.417px;">SensorID:es20</div>
<div class="t b" style="left:916.00px;top:18.0px;letter-spacing:-0.286px;">Axis:sum</div>
<div class="t b" style="left:976.00px;top:18.0px;letter-spacing:-0.562px;">Windowing:Hanning</div>
<div class="t b" style="left:619.00px;top:30.0px;letter-spacing:-0.143px;">Cuttoff(Hz):200</div>
<div class="t b" style="left:715.00px;top:30.0px;letter-spacing:-0.208px;">df(Hz):0.2441</div>
<div class="t b" style="left:800.00px;top:30.0px;letter-spacing:-0.385px;">Sample/Sec:500</div>
<div class="t b" style="left:900.00px;top:30.0px;letter-spacing:-0.250px;">PSD size:2048</div>
<div class="t b" style="left:994.00px;top:30.0px;letter-spacing:-0.455px;">Overlap(%):0</div>
<div class="t b" style="left:1082.50px;top:30.0px;letter-spacing:-0.250px;">TimeRes.(sec):4.096</div>
<div class="t" style="left:39.80px;top:51.0px;letter-spacing:0.133px;">5026</div>
<div class="t" style="left:64.81px;top:51.0px;letter-spacing:0.133px;">5050</div>
<div class="t" style="left:116.93px;top:51.0px;letter-spacing:0.133px;">5100</div>
<div class="t" style="left:169.04px;top:51.0px;letter-spacing:0.133px;">5150</div>
<div class="t" style="left:221.15px;top:51.0px;letter-spacing:0.133px;">5200</div>
<div class="t" style="left:273.27px;top:51.0px;letter-spacing:0.133px;">5250</div>
<div class="t" style="left:325.38px;top:51.0px;letter-spacing:0.133px;">5300</div>
<div class="t" style="left:377.49px;top:51.0px;letter-spacing:0.133px;">5350</div>
<div class="t" style="left:429.61px;top:51.0px;letter-spacing:0.133px;">5400</div>
<div class="t" style="left:481.72px;top:51.0px;letter-spacing:0.133px;">5450</div>
<div class="t" style="left:533.83px;top:51.0px;letter-spacing:0.133px;">5500</div>
<div class="t" style="left:585.95px;top:51.0px;letter-spacing:0.133px;">5550</div>
<div class="t" style="left:638.06px;top:51.0px;letter-spacing:0.133px;">5600</div>
<div class="t" style="left:690.17px;top:51.0px;letter-spacing:0.133px;">5650</div>
<div class="t" style="left:742.28px;top:51.0px;letter-spacing:0.133px;">5700</div>
<div class="t" style="left:794.40px;top:51.0px;letter-spacing:0.133px;">5750</div>
<div class="t" style="left:846.51px;top:51.0px;letter-spacing:0.133px;">5800</div>
<div class="t" style="left:898.62px;top:51.0px;letter-spacing:0.133px;">5850</div>
<div class="t" style="left:950.74px;top:51.0px;letter-spacing:0.133px;">5900</div>
<div class="t" style="left:1002.85px;top:51.0px;letter-spacing:0.133px;">5950</div>
<div class="t" style="left:1055.96px;top:51.0px;letter-spacing:-0.200px;">6000</div>
<div class="t" style="left:1108.08px;top:51.0px;letter-spacing:-0.200px;">6050</div>
<div class="t" style="left:1160.19px;top:51.0px;letter-spacing:-0.200px;">6100</div>
<div class="t" style="left:1212.30px;top:51.0px;letter-spacing:-0.200px;">6150</div>
<div class="t" style="left:1264.42px;top:51.0px;letter-spacing:-0.200px;">6200</div>
<div class="t" style="left:1316.53px;top:51.0px;letter-spacing:-0.200px;">6250</div>
<div class="t" style="left:1368.64px;top:51.0px;letter-spacing:-0.200px;">6300</div>
<div class="t" style="left:1420.75px;top:51.0px;letter-spacing:-0.200px;">6350</div>
<div class="t" style="left:1472.87px;top:51.0px;letter-spacing:-0.200px;">6400</div>
<div class="t" style="left:1524.98px;top:51.0px;letter-spacing:-0.200px;">6450</div>
<div class="t" style="left:1577.09px;top:51.0px;letter-spacing:-0.200px;">6500</div>
<div class="t" style="left:1629.21px;top:51.0px;letter-spacing:-0.200px;">6550</div>
<div class="t" style="left:1681.32px;top:51.0px;letter-spacing:-0.200px;">6600</div>
<div class="t" style="left:1733.43px;top:51.0px;letter-spacing:-0.200px;">6650</div>
<div class="t" style="left:1791.80px;top:51.0px;letter-spacing:-0.200px;">6706</div>
<div class="t" style="left:37.30px;top:923.7px;">0</div>
<div class="t" style="left:37.30px;top:901.7px;">5</div>
<div class="t" style="left:31.30px;top:880.7px;">10</div>
<div class="t" style="left:31.30px;top:858.7px;">15</div>
<div class="t" style="left:31.30px;top:837.7px;">20</div>
<div class="t" style="left:31.30px;top:815.7px;">25</div>
<div class="t" style="left:31.30px;top:794.7px;">30</div>
<div class="t" style="left:31.30px;top:772.7px;">35</div>
<div class="t" style="left:31.30px;top:751.7px;">40</div>
<div class="t" style="left:31.30px;top:729.7px;">45</div>
<div class="t" style="left:31.30px;top:708.7px;">50</div>
<div class="t" style="left:31.30px;top:686.7px;">55</div>
<div class="t" style="left:31.30px;top:665.7px;">60</div>
<div class="t" style="left:31.30px;top:643.7px;">65</div>
<div class="t" style="left:31.30px;top:622.7px;">70</div>
<div class="t" style="left:31.30px;top:600.7px;">75</div>
<div class="t" style="left:31.30px;top:579.7px;">80</div>
<div class="t" style="left:31.30px;top:557.7px;">85</div>
<div class="t" style="left:31.30px;top:536.7px;">90</div>
<div class="t" style="left:31.30px;top:514.7px;">95</div>
<div class="t" style="left:25.30px;top:493.7px;">100</div>
<div class="t" style="left:25.30px;top:471.7px;">105</div>
<div class="t" style="left:26.30px;top:450.7px;">110</div>
<div class="t" style="left:26.30px;top:428.7px;">115</div>
<div class="t" style="left:25.30px;top:407.7px;">120</div>
<div class="t" style="left:25.30px;top:385.7px;">125</div>
<div class="t" style="left:25.30px;top:364.7px;">130</div>
<div class="t" style="left:25.30px;top:342.7px;">135</div>
<div class="t" style="left:25.30px;top:321.7px;">140</div>
<div class="t" style="left:25.30px;top:299.7px;">145</div>
<div class="t" style="left:25.30px;top:278.7px;">150</div>
<div class="t" style="left:25.30px;top:256.7px;">155</div>
<div class="t" style="left:25.30px;top:235.7px;">160</div>
<div class="t" style="left:25.30px;top:213.7px;">165</div>
<div class="t" style="left:25.30px;top:192.7px;">170</div>
<div class="t" style="left:25.30px;top:170.7px;">175</div>
<div class="t" style="left:25.30px;top:149.7px;">180</div>
<div class="t" style="left:25.30px;top:127.7px;">185</div>
<div class="t" style="left:25.30px;top:106.7px;">190</div>
<div class="t" style="left:25.30px;top:84.7px;">195</div>
<div class="t" style="left:25.30px;top:63.7px;">200</div>
<div class="t" style="left:20.60px;top:938.0px;letter-spacing:-0.145px;">13:36:45.755</div>
<div class="t" style="left:25.70px;top:949.5px;letter-spacing:-0.200px;">04/16/2026</div>
<div class="t" style="left:146.36px;top:938.0px;letter-spacing:-0.145px;">13:45:00.000</div>
<div class="t" style="left:151.46px;top:949.5px;letter-spacing:-0.200px;">04/16/2026</div>
<div class="t" style="left:222.70px;top:938.0px;letter-spacing:-0.145px;">13:50:00.000</div>
<div class="t" style="left:227.80px;top:949.5px;letter-spacing:-0.200px;">04/16/2026</div>
<div class="t" style="left:299.04px;top:938.0px;letter-spacing:-0.145px;">13:55:00.000</div>
<div class="t" style="left:304.14px;top:949.5px;letter-spacing:-0.200px;">04/16/2026</div>
<div class="t" style="left:375.38px;top:938.0px;letter-spacing:-0.145px;">14:00:00.000</div>
<div class="t" style="left:380.48px;top:949.5px;letter-spacing:-0.200px;">04/16/2026</div>
<div class="t" style="left:451.71px;top:938.0px;letter-spacing:-0.145px;">14:05:00.000</div>
<div class="t" style="left:456.81px;top:949.5px;letter-spacing:-0.200px;">04/16/2026</div>
<div class="t" style="left:528.05px;top:938.0px;letter-spacing:-0.145px;">14:10:00.000</div>
<div class="t" style="left:533.15px;top:949.5px;letter-spacing:-0.200px;">04/16/2026</div>
<div class="t" style="left:604.39px;top:938.0px;letter-spacing:-0.145px;">14:15:00.000</div>
<div class="t" style="left:609.49px;top:949.5px;letter-spacing:-0.200px;">04/16/2026</div>
<div class="t" style="left:680.73px;top:938.0px;letter-spacing:-0.145px;">14:20:00.000</div>
<div class="t" style="left:685.83px;top:949.5px;letter-spacing:-0.200px;">04/16/2026</div>
<div class="t" style="left:757.07px;top:938.0px;letter-spacing:-0.145px;">14:25:00.000</div>
<div class="t" style="left:762.17px;top:949.5px;letter-spacing:-0.200px;">04/16/2026</div>
<div class="t" style="left:833.40px;top:938.0px;letter-spacing:-0.145px;">14:30:00.000</div>
<div class="t" style="left:838.50px;top:949.5px;letter-spacing:-0.200px;">04/16/2026</div>
<div class="t" style="left:909.74px;top:938.0px;letter-spacing:-0.145px;">14:35:00.000</div>
<div class="t" style="left:914.84px;top:949.5px;letter-spacing:-0.200px;">04/16/2026</div>
<div class="t" style="left:986.08px;top:938.0px;letter-spacing:-0.145px;">14:40:00.000</div>
<div class="t" style="left:991.18px;top:949.5px;letter-spacing:-0.200px;">04/16/2026</div>
<div class="t" style="left:1062.42px;top:938.0px;letter-spacing:-0.145px;">14:45:00.000</div>
<div class="t" style="left:1067.52px;top:949.5px;letter-spacing:-0.200px;">04/16/2026</div>
<div class="t" style="left:1138.75px;top:938.0px;letter-spacing:-0.145px;">14:50:00.000</div>
<div class="t" style="left:1143.85px;top:949.5px;letter-spacing:-0.200px;">04/16/2026</div>
<div class="t" style="left:1215.09px;top:938.0px;letter-spacing:-0.145px;">14:55:00.000</div>
<div class="t" style="left:1220.19px;top:949.5px;letter-spacing:-0.200px;">04/16/2026</div>
<div class="t" style="left:1291.43px;top:938.0px;letter-spacing:-0.145px;">15:00:00.000</div>
<div class="t" style="left:1296.53px;top:949.5px;letter-spacing:-0.200px;">04/16/2026</div>
<div class="t" style="left:1367.77px;top:938.0px;letter-spacing:-0.145px;">15:05:00.000</div>
<div class="t" style="left:1372.87px;top:949.5px;letter-spacing:-0.200px;">04/16/2026</div>
<div class="t" style="left:1444.10px;top:938.0px;letter-spacing:-0.145px;">15:10:00.000</div>
<div class="t" style="left:1449.20px;top:949.5px;letter-spacing:-0.200px;">04/16/2026</div>
<div class="t" style="left:1520.44px;top:938.0px;letter-spacing:-0.145px;">15:15:00.000</div>
<div class="t" style="left:1525.54px;top:949.5px;letter-spacing:-0.200px;">04/16/2026</div>
<div class="t" style="left:1596.78px;top:938.0px;letter-spacing:-0.145px;">15:20:00.000</div>
<div class="t" style="left:1601.88px;top:949.5px;letter-spacing:-0.200px;">04/16/2026</div>
<div class="t" style="left:1673.12px;top:938.0px;letter-spacing:-0.145px;">15:25:00.000</div>
<div class="t" style="left:1678.22px;top:949.5px;letter-spacing:-0.200px;">04/16/2026</div>
<div class="t" style="left:1771.60px;top:938.0px;letter-spacing:-0.145px;">15:31:27.035</div>
<div class="t" style="left:1776.70px;top:949.5px;letter-spacing:-0.200px;">04/16/2026</div>
<div class="t" style="left:914.85px;top:964.0px;letter-spacing:-1.567px;">Time</div>
<div class="t" style="left:1869.00px;top:73.0px;letter-spacing:-0.175px;">-5.00</div>
<div class="t" style="left:1869.00px;top:501.0px;letter-spacing:-0.175px;">-9.00</div>
<div class="t" style="left:1869.00px;top:929.0px;letter-spacing:-0.120px;">-13.00</div>
<div class="t" style="left:1909.5px;top:444.8px;letter-spacing:-0.143px;transform-origin:0 0;transform:rotate(90deg) translateY(-10px);">Amplitude(Log10(g^2/Hz))</div>
</div>
</body></html>
